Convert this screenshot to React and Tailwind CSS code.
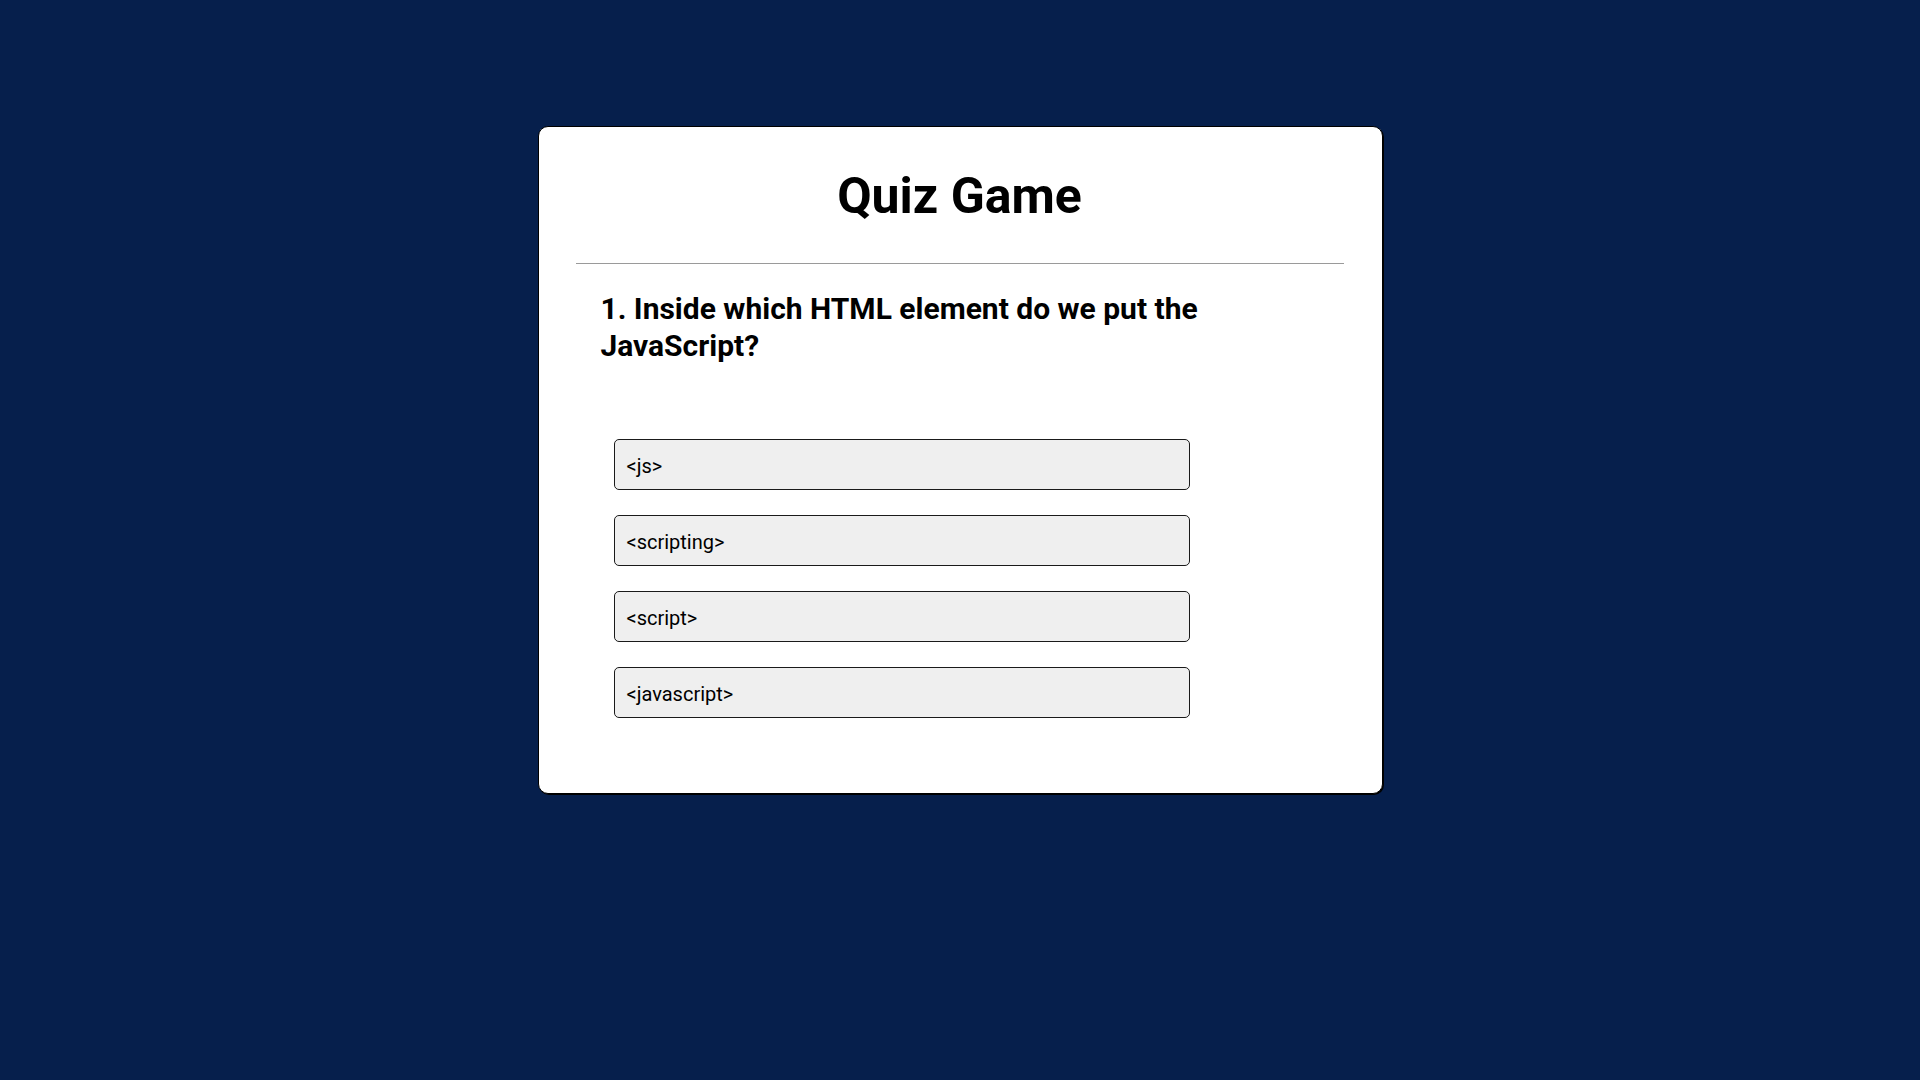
export default function App() {
  const options = ["<js>", "<scripting>", "<script>", "<javascript>"];
  return (
    <div
      className="min-h-screen w-full bg-[#061f4c] flex justify-center pt-[126px]"
      style={{ fontFamily: "Roboto, 'Liberation Sans', sans-serif" }}
    >
      <div className="w-[845px] self-start bg-white border border-black rounded-[10px] shadow-[1px_1px_0_#000] pl-[37px] pr-[38px] pt-[40px] pb-[75px]">
        <h1 className="text-[50px] leading-[58px] font-bold text-black text-center">
          Quiz Game
        </h1>
        <div className="mt-[38px] h-px bg-[#9a9a9a]" />
        <div className="mt-[26px] pl-[25px] max-w-[680px] text-[30px] leading-[37px] font-bold text-black">
          1. Inside which HTML element do we put the JavaScript?
        </div>
        <div className="mt-[75px] ml-[38px] flex flex-col gap-[25px]">
          {options.map((o) => (
            <button
              key={o}
              className="w-[576px] h-[51px] bg-[#efefef] border border-[#1a1a1a] rounded-[5px] px-[12px] pt-[2px] text-left text-[20px] text-black"
            >
              {o}
            </button>
          ))}
        </div>
      </div>
    </div>
  );
}
